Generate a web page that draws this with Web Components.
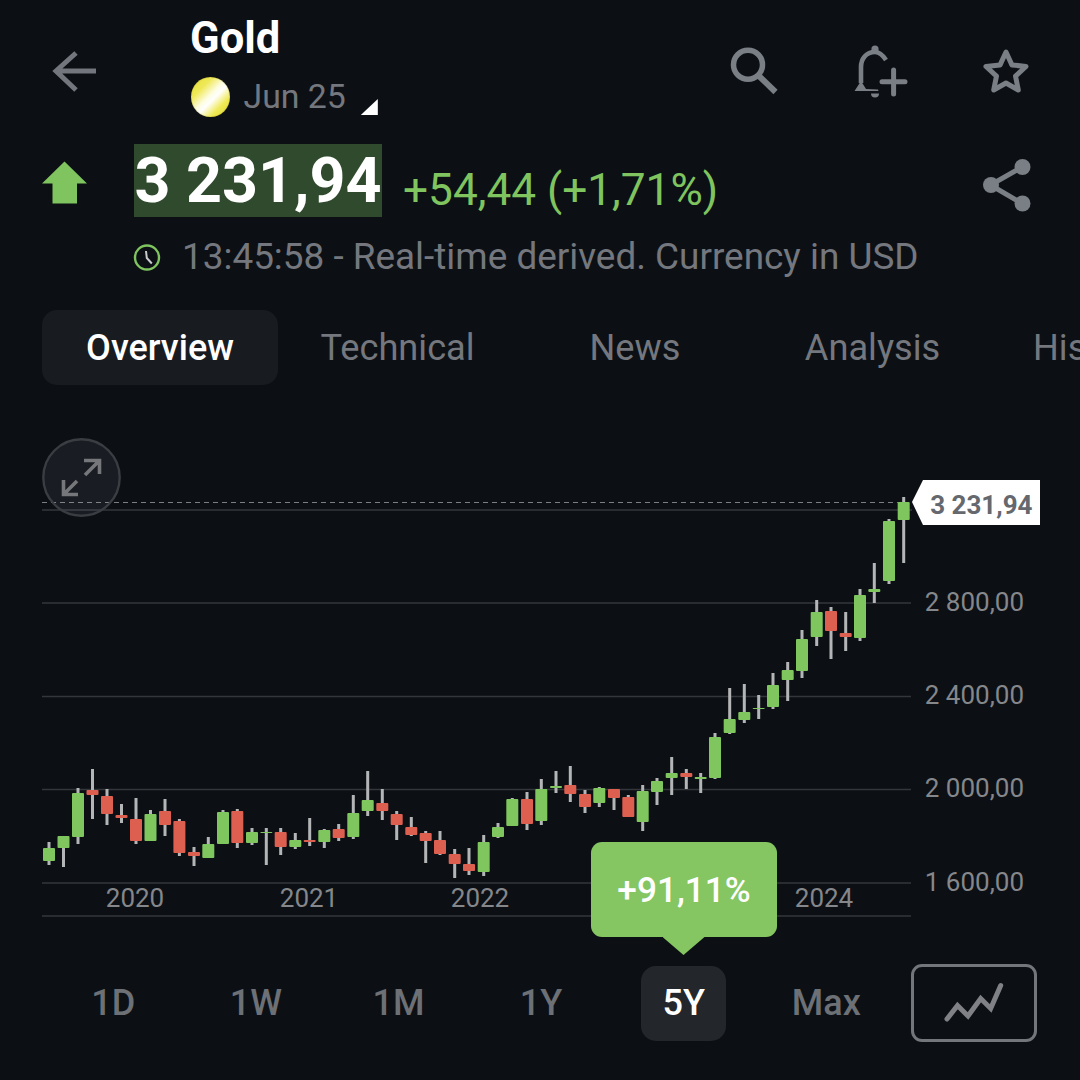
<!DOCTYPE html>
<html><head><meta charset="utf-8">
<style>
html,body{margin:0;padding:0;background:#0c1015;}
body{width:1080px;height:1080px;overflow:hidden;font-family:Roboto,"Liberation Sans",sans-serif;}
</style></head>
<body>
<gold-screen>
  <top-bar title="Gold" contract="Jun 25"></top-bar>
  <quote-row price="3 231,94" change="+54,44 (+1,71%)"></quote-row>
  <time-row>13:45:58 - Real-time derived. Currency in USD</time-row>
  <tab-bar></tab-bar>
  <price-chart></price-chart>
  <range-bar></range-bar>
</gold-screen>
<script>
class GoldScreen extends HTMLElement{constructor(){super();this.attachShadow({mode:'open'}).innerHTML=`<style>:host{display:flex;flex-direction:column;width:1080px;height:1080px;overflow:hidden;background:#0c1015;color:#fff;font-family:Roboto,"Liberation Sans",sans-serif}</style><slot></slot>`;}}
class TopBar extends HTMLElement{connectedCallback(){if(this.shadowRoot)return;this.attachShadow({mode:'open'}).innerHTML=`<style>
:host{display:flex;height:128px;flex:none;position:relative}
.back{width:191px;flex:none;display:flex}
.titles{flex:1;padding-top:14px}
.t{font-size:43.5px;font-weight:700;line-height:50px;color:#fff;margin-left:-1px}
.sub{display:flex;align-items:center;margin-top:12px;height:42px}
.coin{width:39px;height:40px;border-radius:50%;background:linear-gradient(135deg,#e3dc32 0%,#efe95a 28%,#fdfde0 47%,#ffffff 56%,#efe956 75%,#dcd42e 100%);box-shadow:inset 0 0 1px #8a7a10}
.m{font-size:33.8px;color:#74787e;margin-left:13.5px;line-height:42px}
.tri{width:17px;height:16px;background:#fff;clip-path:polygon(100% 0,100% 100%,0 100%);margin-left:15px;margin-top:20px}
svg{display:block;flex:none}
.ic{display:flex;flex:none}
</style>
<div class="back"><svg width="110" height="128" viewBox="0 0 110 128"><path d="M96 71H57M76 53 56 71l20 19" fill="none" stroke="#73777d" stroke-width="5"/></svg></div>
<div class="titles"><div class="t">${this.getAttribute('title')}</div><div class="sub"><span class="coin"></span><span class="m">${this.getAttribute('contract')}</span><span class="tri"></span></div></div>
<div class="ic"><svg width="350" height="128" viewBox="730 0 350 128" fill="none" stroke="#7a7e85">
<circle cx="748" cy="64.7" r="14.5" stroke-width="5.5"/><path d="M759 76 775.5 92" stroke-width="6"/>
<circle cx="875" cy="49" r="3.6" fill="#7a7e85" stroke="none"/>
<path d="M886 60C882 54 878 52 875 52c-9 0-14 7-14 15v16" stroke-width="4.6"/>
<path d="M854.5 91 861 81l5 8 12 .5.5 1.5z" fill="#7a7e85" stroke="none"/>
<path d="M871 93.5h8a4 4 0 0 1-8 0z" fill="#7a7e85" stroke="none"/>
<path d="M882 81.7h23M893.6 70v24" stroke-width="5" stroke-linecap="round"/>
<path d="M1006 52l5.9 12.9 14.1 1.6-10.5 9.6 2.8 13.9L1006 83l-12.3 7 2.8-13.9L986 66.5l14.1-1.6z" stroke-width="5" stroke-linejoin="round"/>
</svg></div>`;}}
class QuoteRow extends HTMLElement{connectedCallback(){if(this.shadowRoot)return;this.attachShadow({mode:'open'}).innerHTML=`<style>
:host{display:flex;height:73px;margin-top:16px;flex:none;align-items:stretch}
.a{width:134px;flex:none}
.p{background:#2f4a2c;width:248px;flex:none;font-size:62.8px;font-weight:700;text-align:center;line-height:73px;color:#fff;white-space:nowrap}
.c{margin-left:21px;font-size:44.2px;color:#7fc45f;line-height:92px;white-space:nowrap;flex:1}
svg{display:block;flex:none}
</style>
<svg class="a" width="134" height="73" viewBox="0 144 134 73"><path d="M64.5 161.5 87 183.5H77V203.5H52.5V183.5H42z" fill="#7fc45f"/></svg>
<div class="p">${this.getAttribute('price')}</div><div class="c">${this.getAttribute('change')}</div>
<svg width="100" height="73" viewBox="980 144 100 73"><path d="M1022 167 990.4 185 1022 203.5" fill="none" stroke="#7a7e85" stroke-width="5"/><g fill="#7a7e85"><circle cx="1022.5" cy="167" r="8"/><circle cx="991" cy="185" r="8"/><circle cx="1022.5" cy="203.5" r="8"/></g></svg>`;}}
class TimeRow extends HTMLElement{constructor(){super();this.attachShadow({mode:'open'}).innerHTML=`<style>
:host{display:flex;height:44px;margin-top:17px;margin-bottom:1px;flex:none;align-items:center;padding-left:133px;font-size:36.9px;color:#74787e;white-space:nowrap}
svg{display:block;margin-right:20px;flex:none;margin-top:2px}
</style><svg width="29" height="29" viewBox="0 0 29 29"><circle cx="14" cy="14.5" r="12" fill="none" stroke="#7fc45f" stroke-width="2.4"/><path d="M13 8l.8 7 5 5.5" fill="none" stroke="#c9cbce" stroke-width="2"/></svg><span><slot></slot></span>`;}}
class TabBar extends HTMLElement{constructor(){super();const tabs=['Overview','Technical','News','Analysis','Historical'];this.attachShadow({mode:'open'}).innerHTML=`<style>
:host{display:flex;height:75px;margin-top:31px;flex:none;padding-left:42px;gap:1.5px;overflow:hidden;font-size:36.2px;color:#74787e}
.t{width:236px;flex:none;display:flex;align-items:center;justify-content:center;border-radius:15px;white-space:nowrap}
.on{background:#181c21;color:#fff;font-weight:500;font-size:36px}
</style>${tabs.map((t,i)=>`<div class="t ${i?'':'on'}">${t}</div>`).join('')}`;}}
const C=[[49,842,865,848,861,1],[63.5,836,867,836,848,1],[78,788,844,793,837,1],[92.5,769,819,790,795,0],[107,789,825,796,814,0],[121.5,804,823,815,818,0],[136,798,844,819,841,0],[150.5,810,841,814,841,1],[165,799,836,811,825,0],[179.4,819,856,821,853,0],[194,847,866,852,856,0],[208.3,837,858,844,858,1],[223,810,844,812,844,1],[237.3,809,848,811,843,0],[252,828,845,832,843,1],[266.3,828,865,832,833,1],[280.7,828,855,832,847,0],[295.3,833,849,840,847,1],[309.7,818,846,840,842,0],[324.3,829,848,830,842,1],[338.7,824,841,829,838,0],[353.3,795,839,813,837,1],[367.7,771,816,800,811,1],[382.3,789,820,803,811,0],[396.7,811,840,814,825,0],[411.3,817,836,827,835,0],[425.7,831,863,833,841,0],[440,831,855,840,854,0],[454.7,849,878,854,864,0],[469,848,875,864,871,0],[483.7,835,876,842,872,1],[498,823,838,827,837,1],[512.3,798,826,799,826,1],[527,792,830,799,824,0],[541.3,779,825,789,821,1],[556,771,793,786,788,1],[570.3,766,802,785,794,0],[585,790,813,794,807,0],[599.3,787,807,788,803,1],[614,789,810,789,798,0],[628.3,795,817,797,817,0],[642.7,785,831,791,822,1],[657,778,805,781,792,1],[671.7,757,795,773,778,1],[686.3,769,789,773,777,0],[700.7,773,793,777,779,1],[715,733,779,737,778,1],[729.7,688,734,719,733,1],[744.3,684,723,712,720,1],[758.7,695,719,708,709,1],[773,673,709,685,707,1],[787.7,662,701,670,680,1],[802,630,678,639,671,1],[816.7,600,646,612,637,1],[831,607,659,611,631,0],[845.7,612,651,633,637,0],[860,589,641,595,638,1],[874.3,563,603,589,592,1],[889,519,584,521,581,1],[903.7,497,563,502,520,1]];
class PriceChart extends HTMLElement{constructor(){super();
const G='#80c65f',R='#dd5f50';
const cs=C.map(([x,wt,wb,bt,bb,g])=>`<rect x="${x-1.5}" y="${wt}" width="3" height="${wb-wt}" fill="#b4b5b6"/><rect x="${x-6}" y="${bt}" width="12" height="${bb-bt}" rx="1" fill="${g?G:R}"/>`).join('');
const lines=[[510,912],[603,911],[696.5,911],[789.5,911],[883,911],[916,911]].map(([y,e])=>`<line x1="42" x2="${e}" y1="${y}" y2="${y}"/>`).join('');
const yl=[['2 800,00',611],['2 400,00',704],['2 000,00',797],['1 600,00',891]].map(([t,y])=>`<text x="1024" y="${y}" text-anchor="end">${t}</text>`).join('');
const xl=[['2020',135],['2021',309],['2022',480],['2024',824]].map(([t,x])=>`<text x="${x}" y="907" text-anchor="middle">${t}</text>`).join('');
this.attachShadow({mode:'open'}).innerHTML=`<style>
:host{display:block;position:relative;height:538px;flex:none;margin-top:45px}
svg.c{display:block;position:absolute;left:0;top:0}
.tip{position:absolute;left:591px;top:412px;width:186px;height:95px;background:#85c662;border-radius:11px;color:#fff;font-size:35.2px;font-weight:500;display:flex;align-items:center;justify-content:center}
.tip:after{content:"";position:absolute;left:71.5px;top:95px;width:42px;height:18px;background:#85c662;clip-path:polygon(0 0,100% 0,50% 100%)}
.exp{position:absolute;left:42px;top:8px;width:79px;height:79px}
</style>
<svg class="c" width="1080" height="538" viewBox="0 430 1080 538" font-family="Roboto,Liberation Sans,sans-serif">
<g stroke="#33373c" stroke-width="1.5">${lines}</g>
<line x1="42" x2="898" y1="502.5" y2="502.5" stroke="#7c7e82" stroke-width="1.2" stroke-dasharray="5 4"/>
<g font-size="26" fill="#85878b">${yl}${xl}</g>
${cs}
<path d="M912 502 923 480H1040V525H923z" fill="#fff"/>
<text x="1032.5" y="514" text-anchor="end" font-size="26" font-weight="700" fill="#65686d">3 231,94</text>
</svg>
<svg class="exp" viewBox="42 438 79 79"><circle cx="81.5" cy="477.5" r="38.2" fill="#c8ccd2" fill-opacity=".07" stroke="#3a3d42" stroke-width="2.4"/><path d="M84 460.5H99.5V474M99.5 460.5 85 475M63.5 480V494.5H78M63.5 494.5 77 481" fill="none" stroke="#75777b" stroke-width="3.6"/></svg>
<div class="tip">+91,11%</div>`;}}
class RangeBar extends HTMLElement{constructor(){super();const r=['1D','1W','1M','1Y','5Y','Max'];this.attachShadow({mode:'open'}).innerHTML=`<style>
:host{display:flex;height:78px;flex:none;padding-left:42px;margin-top:-4px;font-size:36px;font-weight:500;color:#6d7176;align-items:center}
.r{width:142.6px;flex:none;display:flex;justify-content:center}
.r span{width:85px;height:75px;display:flex;align-items:center;justify-content:center;border-radius:15px}
.on span{background:#23272c;color:#fff}
.box{margin-left:13.4px;width:126px;height:78px;box-sizing:border-box;border:3px solid #73777c;border-radius:11px;display:flex;flex:none}
svg{display:block}
</style>${r.map(t=>`<div class="r ${t=='5Y'?'on':''}"><span>${t}</span></div>`).join('')}<div class="box"><svg width="120" height="72" viewBox="915 967 120 72"><path d="M948 1019 958.5 1005.5 969 1016 981.7 998.5 991.7 1008.5 1001.7 985.5" fill="none" stroke="#7f8186" stroke-width="5" stroke-linecap="round"/></svg></div>`;}}
customElements.define('gold-screen',GoldScreen);
customElements.define('top-bar',TopBar);
customElements.define('quote-row',QuoteRow);
customElements.define('time-row',TimeRow);
customElements.define('tab-bar',TabBar);
customElements.define('price-chart',PriceChart);
customElements.define('range-bar',RangeBar);
</script>
</body></html>
